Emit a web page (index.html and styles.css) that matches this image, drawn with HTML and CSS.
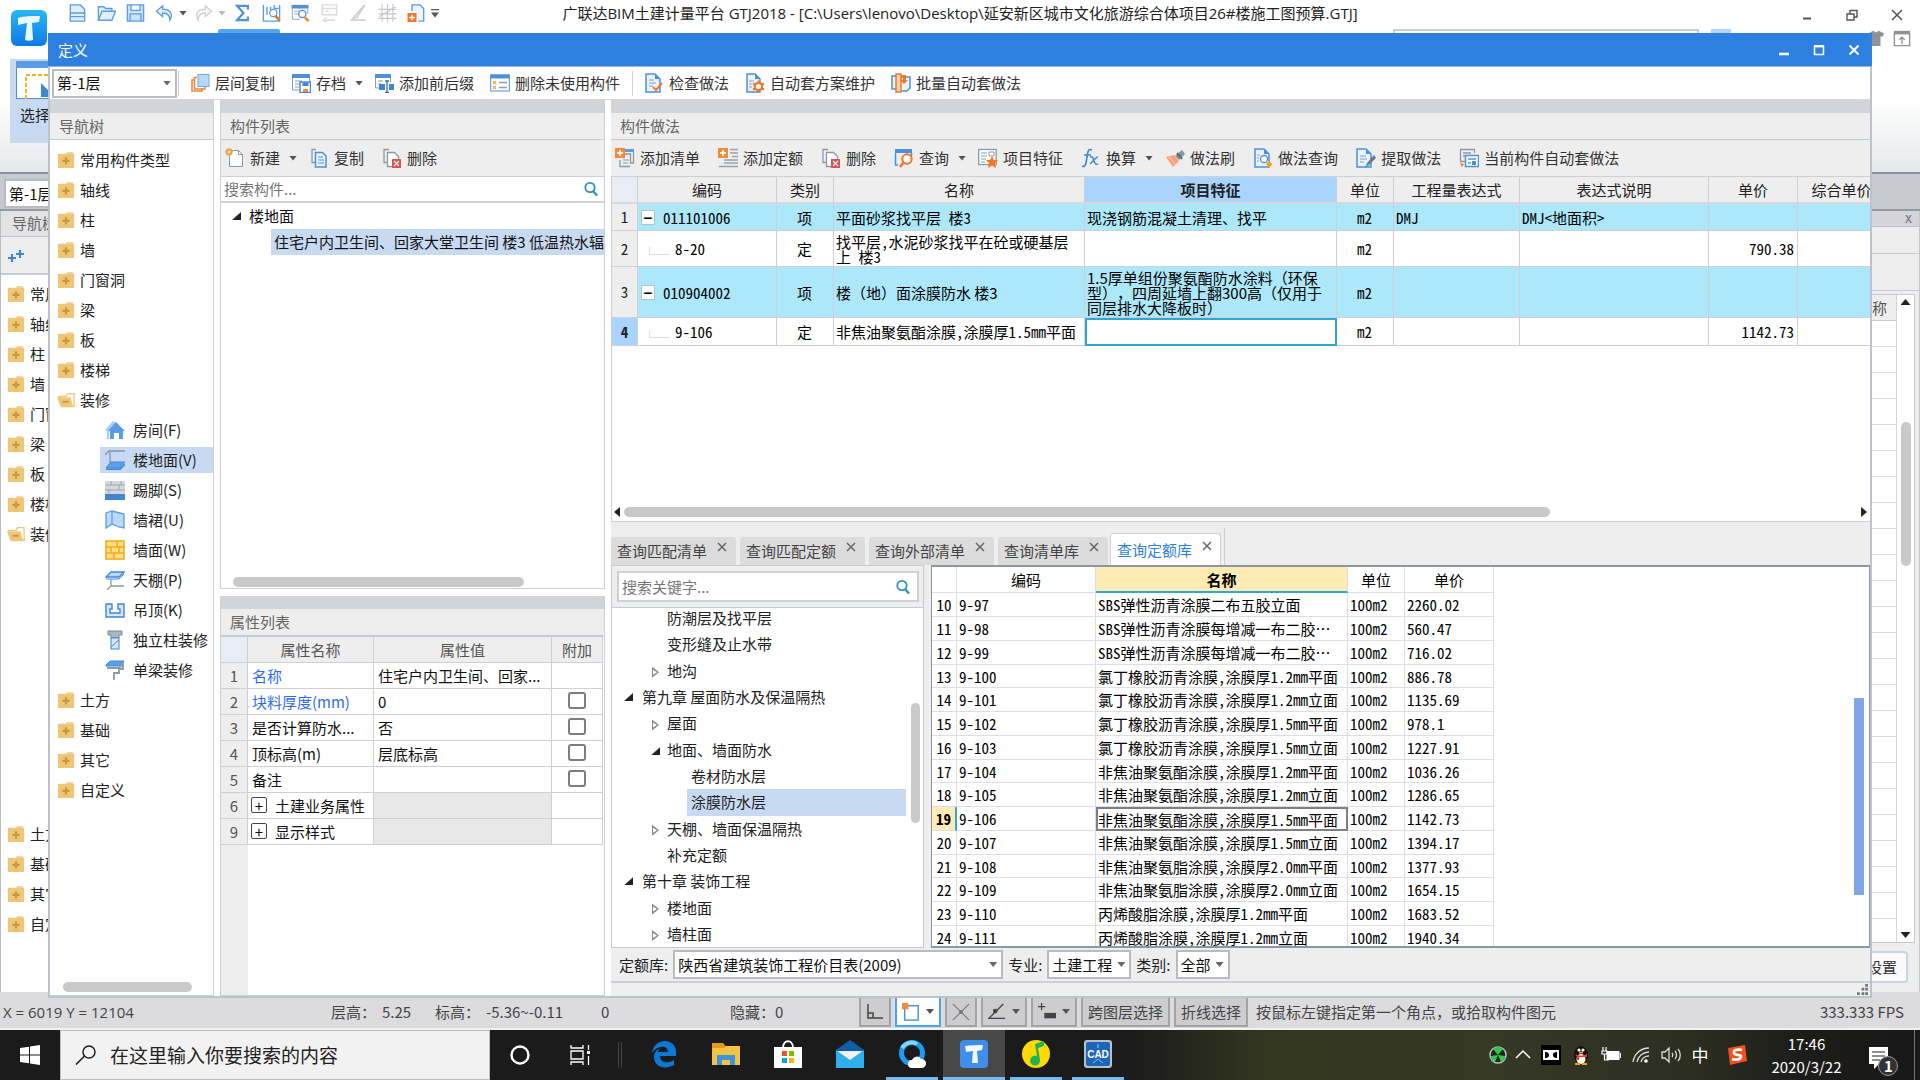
FILE: index.html
```html
<!DOCTYPE html>
<html lang="zh-CN">
<head>
<meta charset="utf-8">
<title>广联达BIM土建计量平台 GTJ2018</title>
<link rel="stylesheet" href="styles.css">
</head>
<body>
<svg class="sprite" aria-hidden="true">
  <symbol id="folder" viewBox="0 0 18 20"><path d="M9 3l1-2h7v3H9z" fill="#f3d6a0"/><rect y="3" width="18" height="16" rx="1" fill="#efc678"/><path d="M9 7v8M5 11h8" stroke="#c8983c" stroke-width="2.4"/></symbol>
  <symbol id="folder-open" viewBox="0 0 20 18"><path d="M2 5h8l2-3h7v14H5z" fill="#fff" stroke="#efc678" stroke-width="1.4"/><path d="M0 6h15l3 11H4z" fill="#efc678"/><path d="M6 11h7" stroke="#c8983c" stroke-width="2"/></symbol>
  <symbol id="search" viewBox="0 0 16 16"><circle cx="7" cy="6.5" r="4.7" fill="none" stroke="#2f8fc4" stroke-width="1.8"/><path d="M10 10l4 4.500" stroke="#2f8fc4" stroke-width="2.400"/></symbol>
  <symbol id="room" viewBox="0 0 20 20"><path d="M0 10L8 1l3 2-7 8v8H2v-8z" fill="#a9cdf5"/><path d="M3 11L11 2l9 9h-2v8h-4v-6H9v6H5v-8z" fill="#5a9ce6"/></symbol>
  <symbol id="floor" viewBox="0 0 20 20"><path d="M0 5l4-4h16M5 1v12" fill="none" stroke="#7d97b5" stroke-width="1.300"/><path d="M1 18l5-6h14l-5 6z" fill="#5aa0ea" stroke="#3f86d6"/><path d="M1 19.300h14l5-5" fill="none" stroke="#3f86d6" stroke-width="1.400"/></symbol>
  <symbol id="skirting" viewBox="0 0 20 20"><rect y="1" width="20" height="13" fill="#d5d8da"/><path d="M0 5h20M0 10h20M6 1v4M14 5v5M4 10v4M16 1v4" stroke="#9fa6ab"/><rect y="14" width="20" height="6" fill="#3f86d6"/></symbol>
  <symbol id="dado" viewBox="0 0 20 20"><path d="M1 3l6-2 12 3v14l-5-1-7-3-6 4z" fill="#bcd9f8" stroke="#5a9ce6" stroke-width="1.300"/><path d="M7 1v13" stroke="#5a9ce6" stroke-width="1.300"/></symbol>
  <symbol id="brick" viewBox="0 0 20 20"><rect x="1" y="1" width="18" height="18" fill="#ffdf8c" stroke="#f5ac14" stroke-width="1.600"/><path d="M1 7h18M1 13h18M12 1v6M6 7v6M14 7v6M9 13v6" stroke="#f5ac14" stroke-width="1.600"/></symbol>
  <symbol id="canopy" viewBox="0 0 20 20"><path d="M1 7l5-5h13l-5 5z" fill="#bcd9f8" stroke="#3f86d6" stroke-width="1.300"/><path d="M1 9h13l5-5" fill="none" stroke="#3f86d6"/><path d="M6 9v7h13M6 16l-4 4" fill="none" stroke="#8d99a5" stroke-width="1.300"/></symbol>
  <symbol id="ceiling" viewBox="0 0 20 20"><path d="M1 4h6v5H5v4h10V9h-2V4h6v13H1z" fill="#d5e7fb" stroke="#3f86d6" stroke-width="1.400"/></symbol>
  <symbol id="column" viewBox="0 0 20 20"><path d="M3 1h14v4h-3v3H6V5H3z" fill="#a9b4be" stroke="#7f8b96"/><rect x="6" y="8" width="8" height="11" fill="#d5e7fb" stroke="#3f86d6"/><path d="M6 17l8-7" stroke="#3f86d6"/></symbol>
  <symbol id="beam" viewBox="0 0 20 20"><path d="M1 5l4-4h14l-4 5H1z" fill="#5aa0ea" stroke="#3f86d6"/><path d="M2 8h12l4-4v5h-4v4H9v7" fill="none" stroke="#8d99a5" stroke-width="1.800"/></symbol>
  <symbol id="layers" viewBox="0 0 20 20"><path d="M5 7H2v11h10v-3" fill="none" stroke="#f08a3c" stroke-width="1.600"/><path d="M7 4.500H4.500V16H15v-2" fill="none" stroke="#f08a3c" stroke-width="1.600"/><rect x="8" y="1.500" width="11" height="12" fill="#b7d8f8" stroke="#6fa8e0"/></symbol>
  <symbol id="archive" viewBox="0 0 20 20"><path d="M1 1h18v4H1z" fill="#4d90dc"/><path d="M1.500 5v12H8M18.500 5v4M4 8h7M4 11h5M4 14h4" fill="none" stroke="#8aa0b8"/><rect x="9" y="9" width="10.500" height="10.500" fill="#fff" stroke="#3f86d6" stroke-width="1.400"/><path d="M11.500 9.500h6v3.500h-6z" fill="#3f86d6"/><path d="M12 16h5v3h-5z" fill="#f08a3c"/></symbol>
  <symbol id="affix" viewBox="0 0 20 20"><path d="M1 1h16v4H1z" fill="#4d90dc"/><path d="M1.500 5v10H7M16.500 5v4M4 8h5M4 11h3" fill="none" stroke="#8aa0b8"/><path d="M5 11h6v6H5zM15 11h5v6h-5z" fill="#3f86d6"/><path d="M13 8v11M11 8h4M11 19.500h4" stroke="#3a6ea8" stroke-width="1.300"/></symbol>
  <symbol id="unused" viewBox="0 0 20 20"><rect x=".700" y="2" width="18.600" height="16" fill="#fff" stroke="#4d90dc"/><path d="M.5 1.500h19v4H.5z" fill="#4d90dc"/><path d="M3 8l3 3M6 8l-3 3M3 13l3 3M6 13l-3 3" stroke="#f5a54a" stroke-width="1.200"/><path d="M9 9.500h8M9 14.500h8" stroke="#8aa0b8" stroke-width="1.500"/></symbol>
  <symbol id="check" viewBox="0 0 20 20"><path d="M2 1h9l5 5v13H2z" fill="#eaf3fd" stroke="#4d90dc" stroke-width="1.500"/><path d="M11 1v5h5z" fill="#4d90dc"/><path d="M5 7h5M5 10h7M5 13h4" stroke="#8aa0b8"/><path d="M9 14l3 3 6-7" fill="none" stroke="#f07828" stroke-width="2"/></symbol>
  <symbol id="gearpage" viewBox="0 0 20 20"><path d="M2 1h8l5 5v13H2z" fill="#eaf3fd" stroke="#4d90dc" stroke-width="1.500"/><path d="M10 1v5h5z" fill="#4d90dc"/><path d="M4 8h5M4 11h3M4 14h3" stroke="#8aa0b8"/><circle cx="13.500" cy="13.500" r="3.700" fill="#fff" stroke="#f07828" stroke-width="2.200"/><path d="M13.500 7.500v2M13.500 17.500v2M8 10.500l2 1M17 15.500l2 1M8 16.500l2-1M17 11.500l2-1" stroke="#f07828" stroke-width="2"/></symbol>
  <symbol id="batch" viewBox="0 0 20 20"><path d="M5 3H1v13h4M12 4h7v11l-3 3h-5" fill="#eaf3fd" stroke="#4d90dc" stroke-width="1.500"/><path d="M5 1h5v18H5z" fill="#fbd3b0" stroke="#f07828" stroke-width="1.500"/><path d="M10 2h5v5h2l-4 4-4-4h3V5h-2z" fill="#f07828"/></symbol>
  <symbol id="new" viewBox="0 0 20 20"><path d="M4.500 2.500h9l4 4v12h-13z" fill="#fff" stroke="#8d99a5"/><path d="M13.500 2.500v4h4" fill="none" stroke="#8d99a5"/><circle cx="4" cy="4" r="3.500" fill="#f5a54a"/><path d="M0 4h8M4 0v8M1 1l6 6M7 1L1 7" stroke="#f5a54a"/><circle cx="4" cy="4" r="1.200" fill="#fff"/></symbol>
  <symbol id="copy" viewBox="0 0 20 20"><path d="M7 1.500H3v13h3" fill="none" stroke="#8d99a5" stroke-width="1.300"/><path d="M6.500 4.500h7l3.500 3.500v11H6.500z" fill="#eaf3fd" stroke="#4d90dc" stroke-width="1.500"/><path d="M9 9h5M9 12h6M9 15h6" stroke="#4d90dc"/></symbol>
  <symbol id="del" viewBox="0 0 20 20"><path d="M7 1.500H2v13h3" fill="none" stroke="#8d99a5" stroke-width="1.300"/><path d="M5.500 4.500h7l4 4v10h-11z" fill="#fff" stroke="#8d99a5" stroke-width="1.300"/><rect x="10" y="11" width="9" height="9" fill="#e05252"/><path d="M12 13l5 5M17 13l-5 5" stroke="#fff" stroke-width="1.200"/></symbol>
  <symbol id="addlist" viewBox="0 0 20 20"><path d="M10 1h9v3h-9z" fill="#5a9ce6"/><path d="M18.500 4v11h-3V6H10M15 18.500H5V12" fill="none" stroke="#8d99a5" stroke-width="1.300"/><path d="M8 12h6M8 15h5" stroke="#8d99a5"/><rect width="10" height="10" fill="#f08a3c"/><path d="M5 2v6M2 5h6" stroke="#fff" stroke-width="1.600"/></symbol>
  <symbol id="addquota" viewBox="0 0 20 20"><path d="M12 1.500h8M12 5h8M14 8.500h6M6 12h14M6 15h14M1 18.500h19" stroke="#9aa1a8" stroke-width="1.600"/><rect width="10" height="10" fill="#f08a3c"/><path d="M5 2v6M2 5h6" stroke="#fff" stroke-width="1.600"/></symbol>
  <symbol id="query" viewBox="0 0 20 20"><path d="M1 1h17v4H1z" fill="#4d90dc"/><path d="M1.500 5v12H4M17.500 5v3" fill="none" stroke="#4d90dc" stroke-width="1.500"/><circle cx="13" cy="11" r="4.700" fill="#fff" stroke="#f07828" stroke-width="2"/><path d="M9.500 14.500L6 19" stroke="#f07828" stroke-width="2.600"/></symbol>
  <symbol id="feature" viewBox="0 0 20 20"><rect x=".700" y="1.500" width="17.500" height="15" fill="#fff" stroke="#8d99a5" stroke-width="1.300"/><path d="M3 5h6M3 8h6M3 11h5M3 14h4M11 4h5v4h-5z" stroke="#8d99a5" fill="none"/><path d="M14 8l2 4h4l-3 3 1 5-4-2.500L10 20l1-5-3-3h4z" fill="#f07828"/></symbol>
  <symbol id="fx" viewBox="0 0 20 20"><path d="M11 2c-3-1.500-4 1-4.500 4L5 15c-.5 3-2 4-4 3M3 7h7" fill="none" stroke="#3f86d6" stroke-width="1.600"/><path d="M9 9c3-1 3 1 4 4s2 4 4 3M17 9c-2-.500-5 5-8 7" fill="none" stroke="#3f86d6" stroke-width="1.500"/></symbol>
  <symbol id="brush" viewBox="0 0 20 20"><path d="M10 8l7-6 3 4-6 6z" fill="#8795a3"/><path d="M12 5l5 6" stroke="#5c6b7a" stroke-width="2"/><path d="M1 9l8-2 5 6-6 6z" fill="#f7a27a"/><path d="M4 9l6 7" stroke="#fbd0ba"/></symbol>
  <symbol id="findpage" viewBox="0 0 20 20"><path d="M2 1h9l5 5v13H2z" fill="#eaf3fd" stroke="#4d90dc" stroke-width="1.500"/><path d="M11 1v5h5z" fill="#4d90dc"/><path d="M4 7h3M4 10h2M4 13h2" stroke="#8aa0b8"/><circle cx="11" cy="11" r="3.500" fill="#fff" stroke="#4d90dc" stroke-width="1.300"/><path d="M16 13l3.500 3.500L16 20l-3-4z" fill="#f5a11c"/></symbol>
  <symbol id="extract" viewBox="0 0 20 20"><path d="M1 1h9l5 5v13H1z" fill="#eaf3fd" stroke="#4d90dc" stroke-width="1.500"/><path d="M10 1v5h5z" fill="#4d90dc"/><path d="M4 8h6M4 11h7M4 14h4" stroke="#8aa0b8"/><path d="M18 7l2 3-7 7-4 3 2-5z" fill="#6c7a88"/><path d="M9 20l2-5 3 2z" fill="#39b6c8"/></symbol>
  <symbol id="autoset" viewBox="0 0 20 20"><path d="M6 13.500H1.500v-12h14V5M4 5h8M4 8h2" fill="none" stroke="#8d99a5" stroke-width="1.300"/><rect x="6.500" y="7.500" width="13" height="11" fill="#fff" stroke="#4d90dc" stroke-width="1.500"/><path d="M9 11h8M9 15h3" stroke="#4d90dc" stroke-width="1.300"/><path d="M13 13h4v4h-4z" fill="#4d90dc"/><path d="M1 15l4 1-2 3z" fill="#f07828"/></symbol>
</svg>

<div class="app">
  <header class="app-top">
    <div class="quick">
      <svg class="logo" viewBox="0 0 36 36"><defs><linearGradient id="lg" x1="0" y1="0" x2="0" y2="1"><stop offset="0" stop-color="#27b8f7"/><stop offset="1" stop-color="#0f78e6"/></linearGradient></defs><rect width="36" height="36" rx="6" fill="url(#lg)"/><path d="M7 8c6-2 13-2 22-2l-1 6-7 1 1 17c-3 1-5 1-8 0l2-17-9 2z" fill="#e9f7ff"/></svg>
      <div class="quick-icons">
        <svg viewBox="0 0 20 20"><path d="M2 1h11l5 5v13H2zM2 10h16M2 14h16" fill="#e3effc" stroke="#5a9ce6" stroke-width="1.500"/></svg>
        <svg viewBox="0 0 20 20"><path d="M1 18V3h6l2 2h7v3M1 18L5 8h15l-4 10z" fill="#e3effc" stroke="#5a9ce6" stroke-width="1.500"/></svg>
        <svg viewBox="0 0 20 20"><path d="M1 1h18v18H1zM5 1v6h10V1M4 19v-8h12v8" fill="#cfe3fa" stroke="#5a9ce6" stroke-width="1.500"/></svg>
        <svg viewBox="0 0 20 20"><path d="M8 2L1 8l7 6v-4c5 0 8 2 8 8 4-7 0-13-8-12z" fill="#e3effc" stroke="#5a9ce6" stroke-width="1.400"/></svg>
        <i class="caret"></i>
        <svg viewBox="0 0 20 20"><path d="M12 2l7 6-7 6v-4c-5 0-8 2-8 8C0 11 4 5 12 6z" fill="#f7f7f7" stroke="#cdd0d3" stroke-width="1.400"/></svg>
        <i class="caret pale"></i>
        <svg viewBox="0 0 20 20"><path d="M16 6V2H4l7 8-7 8h12v-4" fill="none" stroke="#4d90dc" stroke-width="2.400"/></svg>
        <svg viewBox="0 0 20 20"><path d="M1 1v18h18V1M5 3v9M9 3v9M13 1v4h5" fill="none" stroke="#5a9ce6" stroke-width="1.500"/><circle cx="12" cy="10" r="4" fill="#fff" stroke="#5a9ce6" stroke-width="1.400"/><path d="M14 13l5 5" stroke="#e07a3a" stroke-width="3"/></svg>
        <svg viewBox="0 0 20 20"><path d="M0 1h19v4H0z" fill="#4d90dc"/><path d="M1 5v12h8M18 5v6M3 8h5M3 11h4" fill="none" stroke="#8aa0b8"/><circle cx="12" cy="11" r="4" fill="#fff" stroke="#4d90dc" stroke-width="1.500"/><path d="M15 15l4 4" stroke="#f5921c" stroke-width="3"/></svg>
        <svg viewBox="0 0 20 20"><path d="M2 1h16v11H2zM2 5h16M6 8h3M7 15l-4 3 4 2M3 18h13" fill="none" stroke="#dadcde" stroke-width="1.600"/></svg>
        <svg viewBox="0 0 20 20"><path d="M17 1L6 13l-2 3 4-1zM1 18h17" fill="none" stroke="#cfd1d4" stroke-width="2"/></svg>
        <svg viewBox="0 0 20 20"><path d="M4 0v20M10 0v20M16 0v20M0 6h20M0 11h20M0 16h20M1 14L19 3" fill="none" stroke="#c3c6ca" stroke-width="1.200"/></svg>
        <svg viewBox="0 0 20 20"><path d="M5 8V1h9l4 4v14h-6" fill="#eef5fd" stroke="#5a9ce6" stroke-width="1.500"/><rect y="10" width="10" height="10" fill="#f07828"/><path d="M5 12v6M2 15h6" stroke="#fff" stroke-width="1.500"/></svg>
        <i class="caret more"></i>
      </div>
    </div>
    <h1 class="app-title">广联达BIM土建计量平台 GTJ2018 - [C:\Users\lenovo\Desktop\延安新区城市文化旅游综合体项目26#楼施工图预算.GTJ]</h1>
    <div class="app-right">
      <div class="win-controls">
        <button aria-label="最小化"><svg viewBox="0 0 12 12"><path d="M2 9.500h8" stroke="#555" stroke-width="2"/></svg></button>
        <button aria-label="还原"><svg viewBox="0 0 12 12"><path d="M1 5h7v6H1zM4 5V1.500h7V8H8" fill="none" stroke="#555" stroke-width="1.400"/></svg></button>
        <button aria-label="关闭"><svg viewBox="0 0 12 12"><path d="M1 1l10 10M11 1L1 11" stroke="#555" stroke-width="1.500"/></svg></button>
      </div>
      <div class="app-tools">
        <span class="app-search"></span>
        <span class="avatar"></span>
        <svg viewBox="0 0 20 20"><path d="M7 2l3 2 3-2 6 3-2 4-2-1v11H5V8L3 9 1 5z" fill="#8f9296"/></svg>
        <svg viewBox="0 0 20 20"><path d="M1 2h18v4H1z" fill="#8f9296"/><path d="M1.500 5v13.500h17V5M10 17V9M7 12l3-3 3 3" fill="none" stroke="#8f9296" stroke-width="1.500"/></svg>
      </div>
    </div>
    <span class="ribbon-tab"></span>
  </header>
  <section class="ribbon">
    <button class="pick"><svg viewBox="0 0 50 38"><rect x=".5" y=".5" width="49" height="37" fill="#fff" stroke="#4d90dc"/><rect width="50" height="7" fill="#5a9ce6"/><path d="M10 38V14h40" fill="none" stroke="#f5b41c" stroke-width="2" stroke-dasharray="4 2"/><path d="M25 22l14 14H25z" fill="#3f86d6"/></svg><span>选择</span></button>
  </section>
  <section class="strip"><span class="combo"><select aria-label="楼层"><option>第-1层</option></select></span></section>
  <div class="workspace">
    <aside class="back-nav">
      <h2 class="back-title">导航树</h2>
      <div class="back-tools"><svg viewBox="0 0 16 14"><path d="M4 5v8M0 9h8M12 1v8M8 5h8" stroke="#3f86d6" stroke-width="2.200"/></svg></div>
      <ul class="nav">
        <li><svg class="fi"><use href="#folder"/></svg>常用构件类型</li>
        <li><svg class="fi"><use href="#folder"/></svg>轴线</li>
        <li><svg class="fi"><use href="#folder"/></svg>柱</li>
        <li><svg class="fi"><use href="#folder"/></svg>墙</li>
        <li><svg class="fi"><use href="#folder"/></svg>门窗洞</li>
        <li><svg class="fi"><use href="#folder"/></svg>梁</li>
        <li><svg class="fi"><use href="#folder"/></svg>板</li>
        <li><svg class="fi"><use href="#folder"/></svg>楼梯</li>
        <li><svg class="fi"><use href="#folder-open"/></svg>装修</li>
        <li class="after-open"><svg class="fi"><use href="#folder"/></svg>土方</li>
        <li><svg class="fi"><use href="#folder"/></svg>基础</li>
        <li><svg class="fi"><use href="#folder"/></svg>其它</li>
        <li><svg class="fi"><use href="#folder"/></svg>自定义</li>
      </ul>
    </aside>
    <aside class="back-side">
      <div class="side-head"><button aria-label="关闭面板">x</button></div>
      <div class="side-bar"></div>
      <div class="side-bar tall"></div>
      <div class="side-body">
        <div class="side-grid"><div class="side-th">称</div></div>
        <div class="side-scroll"><i class="tri up"></i><i class="thumb"></i><i class="tri down"></i></div>
      </div>
      <div class="side-foot"><button>设置</button></div>
    </aside>
  </div>
  <footer class="status">
    <span class="coord">X = 6019 Y = 12104</span>
    <span class="level">层高：</span><span class="level-v">5.25</span>
    <span class="elev">标高：</span><span class="elev-v">-5.36~-0.11</span>
    <span class="zero">0</span>
    <span class="hid">隐藏：0</span>
    <div class="modes">
      <button aria-label="正交"><svg viewBox="0 0 18 18"><path d="M2 1v14h15M2 10h5v5" fill="none" stroke="#444" stroke-width="1.500"/></svg></button>
      <button class="on" aria-label="矩形"><svg viewBox="0 0 20 20"><rect x="3" y="3" width="15" height="16" fill="none" stroke="#4d90dc" stroke-width="1.600"/><rect width="7" height="7" fill="#f08a3c"/></svg><i class="caret"></i></button>
      <button aria-label="交点"><svg viewBox="0 0 20 20"><path d="M1 1l18 18M19 1L1 19" stroke="#777" stroke-width="1.200"/><rect x="8" y="8" width="4" height="4" fill="#777"/></svg></button>
      <button aria-label="角度"><svg viewBox="0 0 20 20"><path d="M17 1L1 17h18" fill="none" stroke="#444" stroke-width="1.500"/><circle cx="8" cy="9" r="2.600" fill="#444"/></svg><i class="caret"></i></button>
      <button aria-label="偏移"><svg viewBox="0 0 20 20"><path d="M4 0v8M0 4h8" stroke="#444" stroke-width="1.400"/><rect x="7" y="11" width="13" height="6" fill="#444"/></svg><i class="caret"></i></button>
      <button>跨图层选择</button>
      <button>折线选择</button>
    </div>
    <span class="hint">按鼠标左键指定第一个角点，或拾取构件图元</span>
    <span class="fps">333.333 FPS</span>
  </footer>
  <nav class="taskbar">
    <button class="start" aria-label="开始"><svg viewBox="0 0 20 20"><path d="M0 3l9-1.200v7.700H0zM10 1.600L20 0v9.500H10zM0 10.500h9v7.700L0 17zM10 10.500h10V20l-10-1.600z" fill="#fff"/></svg></button>
    <label class="task-search"><svg viewBox="0 0 22 20"><circle cx="14" cy="7" r="6" fill="none" stroke="#222" stroke-width="1.500"/><path d="M9.500 11L1 19.500" stroke="#222" stroke-width="1.600"/></svg><input type="text" placeholder="在这里输入你要搜索的内容"></label>
    <div class="task-sys">
      <svg viewBox="0 0 20 20"><circle cx="10" cy="10" r="8.500" fill="none" stroke="#fff" stroke-width="2.400"/></svg>
      <svg viewBox="0 0 20 20"><path d="M1 0v3h12V0M1 20v-3h12v3M1 6h12v8H1zM18.500 0v5M18.500 11v9" fill="none" stroke="#fff" stroke-width="1.300"/><rect x="17" y="6" width="3" height="3" fill="#fff"/></svg>
      <i class="grip"></i>
    </div>
    <div class="task-apps">
      <a href="#" aria-label="Edge"><svg viewBox="0 0 28 28"><path d="M2 13C3 5 9 1 15 1c7 0 11 5 11 11v4H10c0 7 8 8 14 4v5c-9 5-20 2-20-8 0-4 2-7 6-9-2 2-2 3-2 4h10c0-7-11-7-16 1z" fill="#0a78d6"/></svg></a>
      <a href="#" aria-label="文件资源管理器"><svg viewBox="0 0 28 28"><path d="M0 3h11l2 3h15v19H0z" fill="#f5c344"/><path d="M0 3h11l2 3v2H0z" fill="#e09a1c"/><path d="M5 25V15h18v10h-5v-5h-8v5z" fill="#3b94dc"/></svg></a>
      <a href="#" aria-label="应用商店"><svg viewBox="0 0 28 28"><path d="M9 8c0-9 10-9 10 0" fill="none" stroke="#fff" stroke-width="1.800"/><path d="M0 7h28v21H0z" fill="#fff"/><path d="M8 11h5v5H8z" fill="#f25022"/><path d="M15 11h5v5h-5z" fill="#7fba00"/><path d="M8 18h5v5H8z" fill="#00a4ef"/><path d="M15 18h5v5h-5z" fill="#ffb900"/></svg></a>
      <a href="#" aria-label="邮件"><svg viewBox="0 0 28 28"><path d="M0 10L14 0l14 10v17H0z" fill="#0f5fa8"/><path d="M2 11h24v9H2z" fill="#f2f2f2"/><path d="M0 10l14 10 14-10v18H0z" fill="#2fb0ee"/></svg></a>
      <a href="#" class="run" aria-label="浏览器"><svg viewBox="0 0 28 28"><circle cx="14" cy="13" r="10.500" fill="none" stroke="#1e9bf0" stroke-width="5"/><path d="M4 8a11 11 0 0 1 15-4" fill="none" stroke="#7fd4fa" stroke-width="4"/><path d="M14 28a4 4 0 0 1 0-8 5 5 0 0 1 9-1 4.500 4.500 0 0 1 1 9z" fill="#fff"/></svg></a>
      <a href="#" class="run active" aria-label="广联达"><svg viewBox="0 0 28 28"><rect width="28" height="28" rx="4" fill="#3f8eea"/><path d="M5 6c6-1 12-1 18-1l-1 5-5 1 1 12h-6l1-12-7 1z" fill="#f1f8ff"/></svg></a>
      <a href="#" class="run" aria-label="音乐"><svg viewBox="0 0 28 28"><circle cx="14" cy="14" r="14" fill="#ffd900"/><path d="M13 4l9-3v5l-6 2 2 12a5 5 0 1 1-3-4z" fill="#1fb25a"/></svg></a>
      <a href="#" class="run" aria-label="CAD"><svg viewBox="0 0 28 28"><rect width="28" height="28" rx="3" fill="#b9c0c8"/><rect x="2" y="2" width="24" height="24" rx="2" fill="#1c66b8"/><path d="M9 23l5-4 5 4M14 4v4" fill="none" stroke="#8fc0ee"/><text x="14" y="18" text-anchor="middle" class="cad">CAD</text></svg></a>
    </div>
    <div class="tray">
      <svg viewBox="0 0 20 20"><circle cx="10" cy="10" r="8" fill="#222" stroke="#bbb" stroke-width="1.500"/><path d="M10 10L5 4a8 8 0 0 1 10 0zM10 10l7 1a7 7 0 0 1-4 6zM10 10l-7 1a7 7 0 0 0 4 6z" fill="#2fc84a"/></svg>
      <svg class="chev" viewBox="0 0 16 16"><path d="M1 11l7-7 7 7" fill="none" stroke="#fff" stroke-width="1.500"/></svg>
      <svg viewBox="0 0 20 20"><rect width="20" height="20" fill="#000"/><path d="M2 5h16v10H2z" fill="#fff"/><path d="M4 7c3 0 4 1 4 3s-1 3-4 3zM16 7c-3 0-4 1-4 3s1 3 4 3z" fill="#000"/></svg>
      <svg viewBox="0 0 20 20"><ellipse cx="10" cy="10" rx="7" ry="9" fill="#111"/><ellipse cx="10" cy="14" rx="4.500" ry="5" fill="#fff"/><circle cx="8" cy="5" r="1.600" fill="#fff"/><circle cx="12" cy="5" r="1.600" fill="#fff"/><path d="M4 9c4 2 8 2 12 0v3H8v3H6v-3z" fill="#e32"/><path d="M4 19h5M11 19h5M8 7.500h4" stroke="#f5a11c" stroke-width="2"/></svg>
      <svg viewBox="0 0 20 20"><rect x="5.500" y="6" width="13" height="9" fill="#fff"/><path d="M19.500 8v5M2 2v4M5 2v4M1 6h5v3H1zM3.500 9v6H8" fill="none" stroke="#fff" stroke-width="1.200"/></svg>
      <svg viewBox="0 0 20 20"><path d="M2 17A16 16 0 0 1 18 3M6 17A12 12 0 0 1 18 7M10 17a8 8 0 0 1 8-6" fill="none" stroke="#ddd" stroke-width="1.300"/><circle cx="15" cy="16" r="1.800" fill="#fff"/></svg>
      <svg viewBox="0 0 20 20"><path d="M1 7h3l4-4v14l-4-4H1zM11 8c1 1 1 3 0 4M14 6c2 2 2 6 0 8M17 4c3 3 3 9 0 12" fill="none" stroke="#ddd" stroke-width="1.300"/></svg>
      <span class="ime">中</span>
      <svg viewBox="0 0 20 20"><path d="M1 3l17-3 2 16-17 4z" fill="#f2501e"/><path d="M15 5c-5-1-9 0-8 3s8 1 7 4-6 3-9 2" fill="none" stroke="#fff" stroke-width="2.600"/></svg>
    </div>
    <div class="clock"><span>17:46</span><span>2020/3/22</span></div>
    <div class="notice"><svg viewBox="0 0 30 32"><path d="M1 2h19v17h-9l-5 5v-5H1z" fill="#fff"/><path d="M4 7h13M4 11h13M4 15h8" stroke="#222"/><circle cx="20" cy="21" r="9.500" fill="#333" stroke="#999"/></svg><b>1</b></div>
  </nav>
</div>

<section class="dialog">
  <header class="dlg-head"><h2>定义</h2>
    <div class="dlg-controls">
      <button aria-label="最小化"><svg viewBox="0 0 12 12"><path d="M1 10h10" stroke="#fff" stroke-width="2.600"/></svg></button>
      <button aria-label="最大化"><svg viewBox="0 0 12 12"><path d="M1.500 2h9v8.500h-9z" fill="none" stroke="#fff" stroke-width="1.500"/><path d="M1 2.200h10" stroke="#fff" stroke-width="2.400"/></svg></button>
      <button aria-label="关闭"><svg viewBox="0 0 12 12"><path d="M1.500 1.500l9 9M10.500 1.500l-9 9" stroke="#fff" stroke-width="2"/></svg></button>
    </div>
  </header>
  <div class="dlg-main">
    <div class="toolbar top-tools">
      <span class="combo"><select aria-label="楼层"><option>第-1层</option></select></span>
      <i class="sep"></i>
      <button><svg><use href="#layers"/></svg>层间复制</button>
      <button class="drop"><svg><use href="#archive"/></svg>存档<i class="caret"></i></button>
      <button><svg><use href="#affix"/></svg>添加前后缀</button>
      <button><svg><use href="#unused"/></svg>删除未使用构件</button>
      <i class="sep"></i>
      <button><svg><use href="#check"/></svg>检查做法</button>
      <button><svg><use href="#gearpage"/></svg>自动套方案维护</button>
      <button><svg><use href="#batch"/></svg>批量自动套做法</button>
    </div>
    <div class="dlg-body">
      <aside class="panel">
        <h3 class="panel-title">导航树</h3>
        <ul class="nav">
          <li><svg class="fi"><use href="#folder"/></svg>常用构件类型</li>
          <li><svg class="fi"><use href="#folder"/></svg>轴线</li>
          <li><svg class="fi"><use href="#folder"/></svg>柱</li>
          <li><svg class="fi"><use href="#folder"/></svg>墙</li>
          <li><svg class="fi"><use href="#folder"/></svg>门窗洞</li>
          <li><svg class="fi"><use href="#folder"/></svg>梁</li>
          <li><svg class="fi"><use href="#folder"/></svg>板</li>
          <li><svg class="fi"><use href="#folder"/></svg>楼梯</li>
          <li><svg class="fi"><use href="#folder-open"/></svg>装修</li>
          <li class="kid"><svg><use href="#room"/></svg>房间(F)</li>
          <li class="kid sel"><svg><use href="#floor"/></svg>楼地面(V)</li>
          <li class="kid"><svg><use href="#skirting"/></svg>踢脚(S)</li>
          <li class="kid"><svg><use href="#dado"/></svg>墙裙(U)</li>
          <li class="kid"><svg><use href="#brick"/></svg>墙面(W)</li>
          <li class="kid"><svg><use href="#canopy"/></svg>天棚(P)</li>
          <li class="kid"><svg><use href="#ceiling"/></svg>吊顶(K)</li>
          <li class="kid"><svg><use href="#column"/></svg>独立柱装修</li>
          <li class="kid"><svg><use href="#beam"/></svg>单梁装修</li>
          <li><svg class="fi"><use href="#folder"/></svg>土方</li>
          <li><svg class="fi"><use href="#folder"/></svg>基础</li>
          <li><svg class="fi"><use href="#folder"/></svg>其它</li>
          <li><svg class="fi"><use href="#folder"/></svg>自定义</li>
        </ul>
        <i class="hbar"></i>
      </aside>
      <div class="mid">
        <section class="panel">
          <h3 class="panel-title">构件列表</h3>
          <div class="toolbar sub-tools">
            <button class="drop"><svg><use href="#new"/></svg>新建<i class="caret"></i></button>
            <button><svg><use href="#copy"/></svg>复制</button>
            <button><svg><use href="#del"/></svg>删除</button>
          </div>
          <label class="search flat"><input type="text" placeholder="搜索构件..."><svg><use href="#search"/></svg></label>
          <ul class="parts">
            <li><i class="open"></i>楼地面</li>
            <li class="part sel">住宅户内卫生间、回家大堂卫生间 楼3 低温热水辐射</li>
          </ul>
          <i class="hbar wide"></i>
        </section>
        <section class="panel">
          <h3 class="panel-title">属性列表</h3>
          <div class="props-wrap">
          <table class="props">
            <colgroup><col class="p0"><col class="p1"><col class="p2"><col class="p3"></colgroup>
            <thead><tr><th></th><th>属性名称</th><th>属性值</th><th>附加</th></tr></thead>
            <tbody>
              <tr><th>1</th><td class="link">名称</td><td>住宅户内卫生间、回家...</td><td></td></tr>
              <tr><th>2</th><td class="link">块料厚度(mm)</td><td>0</td><td class="tick"><input type="checkbox" aria-label="附加 块料厚度"></td></tr>
              <tr><th>3</th><td>是否计算防水...</td><td>否</td><td class="tick"><input type="checkbox" aria-label="附加 防水"></td></tr>
              <tr><th>4</th><td>顶标高(m)</td><td>层底标高</td><td class="tick"><input type="checkbox" aria-label="附加 顶标高"></td></tr>
              <tr><th>5</th><td>备注</td><td></td><td class="tick"><input type="checkbox" aria-label="附加 备注"></td></tr>
              <tr><th>6</th><td class="grp"><button class="plus">+</button>土建业务属性</td><td class="off"></td><td></td></tr>
              <tr><th>9</th><td class="grp"><button class="plus">+</button>显示样式</td><td class="off"></td><td></td></tr>
            </tbody>
          </table>
          </div>
        </section>
      </div>
      <section class="work">
        <div class="work-head">
          <h3 class="panel-title">构件做法</h3>
          <div class="toolbar sub-tools">
            <button><svg><use href="#addlist"/></svg>添加清单</button>
            <button><svg><use href="#addquota"/></svg>添加定额</button>
            <button><svg><use href="#del"/></svg>删除</button>
            <button class="drop"><svg><use href="#query"/></svg>查询<i class="caret"></i></button>
            <button><svg><use href="#feature"/></svg>项目特征</button>
            <button class="drop"><svg><use href="#fx"/></svg>换算<i class="caret"></i></button>
            <button><svg><use href="#brush"/></svg>做法刷</button>
            <button><svg><use href="#findpage"/></svg>做法查询</button>
            <button><svg><use href="#extract"/></svg>提取做法</button>
            <button><svg><use href="#autoset"/></svg>当前构件自动套做法</button>
          </div>
        </div>
        <div class="sheet">
          <table class="bill">
            <colgroup><col class="b0"><col class="b1"><col class="b2"><col class="b3"><col class="b4"><col class="b5"><col class="b6"><col class="b7"><col class="b8"><col class="b9"></colgroup>
            <thead><tr><th></th><th>编码</th><th>类别</th><th>名称</th><th class="hot">项目特征</th><th>单位</th><th>工程量表达式</th><th>表达式说明</th><th>单价</th><th>综合单价</th></tr></thead>
            <tbody>
              <tr class="item one"><th>1</th><td class="code"><button class="fold">−</button>011101006</td><td class="mid-c">项</td><td>平面砂浆找平层 楼3</td><td>现浇钢筋混凝土清理、找平</td><td class="mid-c">m2</td><td>DMJ</td><td>DMJ&lt;地面积&gt;</td><td></td><td></td></tr>
              <tr class="two"><th>2</th><td class="sub"><i class="branch"></i>8-20</td><td class="mid-c">定</td><td>找平层,水泥砂浆找平在砼或硬基层上 楼3</td><td></td><td class="mid-c">m2</td><td></td><td></td><td class="num">790.38</td><td></td></tr>
              <tr class="item three"><th>3</th><td class="code"><button class="fold">−</button>010904002</td><td class="mid-c">项</td><td class="full">楼（地）面涂膜防水 楼3</td><td class="full">1.5厚单组份聚氨酯防水涂料（环保型），四周延墙上翻300高（仅用于同层排水大降板时）</td><td class="mid-c">m2</td><td></td><td></td><td></td><td></td></tr>
              <tr><th class="cur">4</th><td class="sub"><i class="branch"></i>9-106</td><td class="mid-c">定</td><td>非焦油聚氨酯涂膜,涂膜厚1.5mm平面</td><td class="edit"></td><td class="mid-c">m2</td><td></td><td></td><td class="num">1142.73</td><td></td></tr>
            </tbody>
          </table>
          <div class="sheet-scroll"><i class="tri left"></i><i class="track"></i><i class="tri right"></i></div>
        </div>
        <div class="lower">
          <div class="tabs">
            <div class="tab"><button>查询匹配清单</button><button class="x" aria-label="关闭"><svg viewBox="0 0 10 10"><path d="M1 1l8 8M9 1L1 9"/></svg></button></div>
            <div class="tab"><button>查询匹配定额</button><button class="x" aria-label="关闭"><svg viewBox="0 0 10 10"><path d="M1 1l8 8M9 1L1 9"/></svg></button></div>
            <div class="tab"><button>查询外部清单</button><button class="x" aria-label="关闭"><svg viewBox="0 0 10 10"><path d="M1 1l8 8M9 1L1 9"/></svg></button></div>
            <div class="tab"><button>查询清单库</button><button class="x" aria-label="关闭"><svg viewBox="0 0 10 10"><path d="M1 1l8 8M9 1L1 9"/></svg></button></div>
            <div class="tab act"><button>查询定额库</button><button class="x" aria-label="关闭"><svg viewBox="0 0 10 10"><path d="M1 1l8 8M9 1L1 9"/></svg></button></div>
            <i class="tab-end"></i>
          </div>
          <div class="query">
            <div class="chapters">
              <label class="search boxed"><input type="text" placeholder="搜索关键字..."><svg><use href="#search"/></svg></label>
              <div class="tree-area">
                <ul class="tree">
                  <li class="l2">防潮层及找平层</li>
                  <li class="l2">变形缝及止水带</li>
                  <li class="l2"><i class="shut"></i>地沟</li>
                  <li class="l1"><i class="open"></i>第九章 屋面防水及保温隔热</li>
                  <li class="l2"><i class="shut"></i>屋面</li>
                  <li class="l2"><i class="open"></i>地面、墙面防水</li>
                  <li class="l3">卷材防水层</li>
                  <li class="l3 sel">涂膜防水层</li>
                  <li class="l2"><i class="shut"></i>天棚、墙面保温隔热</li>
                  <li class="l2">补充定额</li>
                  <li class="l1"><i class="open"></i>第十章 装饰工程</li>
                  <li class="l2"><i class="shut"></i>楼地面</li>
                  <li class="l2"><i class="shut"></i>墙柱面</li>
                </ul>
                <i class="vbar"></i>
              </div>
            </div>
            <div class="quota">
              <table class="rates">
                <colgroup><col class="r0"><col class="r1"><col class="r2"><col class="r3"><col class="r4"></colgroup>
                <thead><tr><th></th><th>编码</th><th class="hot">名称</th><th>单位</th><th>单价</th></tr></thead>
                <tbody>
                  <tr><th>10</th><td>9-97</td><td>SBS弹性沥青涂膜二布五胶立面</td><td>100m2</td><td>2260.02</td></tr>
                  <tr><th>11</th><td>9-98</td><td>SBS弹性沥青涂膜每增减一布二胶…</td><td>100m2</td><td>560.47</td></tr>
                  <tr><th>12</th><td>9-99</td><td>SBS弹性沥青涂膜每增减一布二胶…</td><td>100m2</td><td>716.02</td></tr>
                  <tr><th>13</th><td>9-100</td><td>氯丁橡胶沥青涂膜,涂膜厚1.2mm平面</td><td>100m2</td><td>886.78</td></tr>
                  <tr><th>14</th><td>9-101</td><td>氯丁橡胶沥青涂膜,涂膜厚1.2mm立面</td><td>100m2</td><td>1135.69</td></tr>
                  <tr><th>15</th><td>9-102</td><td>氯丁橡胶沥青涂膜,涂膜厚1.5mm平面</td><td>100m2</td><td>978.1</td></tr>
                  <tr><th>16</th><td>9-103</td><td>氯丁橡胶沥青涂膜,涂膜厚1.5mm立面</td><td>100m2</td><td>1227.91</td></tr>
                  <tr><th>17</th><td>9-104</td><td>非焦油聚氨酯涂膜,涂膜厚1.2mm平面</td><td>100m2</td><td>1036.26</td></tr>
                  <tr><th>18</th><td>9-105</td><td>非焦油聚氨酯涂膜,涂膜厚1.2mm立面</td><td>100m2</td><td>1286.65</td></tr>
                  <tr><th class="cur">19</th><td>9-106</td><td class="pickd">非焦油聚氨酯涂膜,涂膜厚1.5mm平面</td><td>100m2</td><td>1142.73</td></tr>
                  <tr><th>20</th><td>9-107</td><td>非焦油聚氨酯涂膜,涂膜厚1.5mm立面</td><td>100m2</td><td>1394.17</td></tr>
                  <tr><th>21</th><td>9-108</td><td>非焦油聚氨脂涂膜,涂膜厚2.0mm平面</td><td>100m2</td><td>1377.93</td></tr>
                  <tr><th>22</th><td>9-109</td><td>非焦油聚氨脂涂膜,涂膜厚2.0mm立面</td><td>100m2</td><td>1654.15</td></tr>
                  <tr><th>23</th><td>9-110</td><td>丙烯酸脂涂膜,涂膜厚1.2mm平面</td><td>100m2</td><td>1683.52</td></tr>
                  <tr><th>24</th><td>9-111</td><td>丙烯酸脂涂膜,涂膜厚1.2mm立面</td><td>100m2</td><td>1940.34</td></tr>
                </tbody>
              </table>
              <i class="bluebar"></i>
            </div>
          </div>
          <div class="filters">
            <label for="lib">定额库:</label><span class="combo lib"><select id="lib"><option>陕西省建筑装饰工程价目表(2009)</option></select></span>
            <label for="major">专业:</label><span class="combo major"><select id="major"><option>土建工程</option></select></span>
            <label for="kind">类别:</label><span class="combo kind"><select id="kind"><option>全部</option></select></span>
          </div>
        </div>
        <div class="dlg-foot"><svg viewBox="0 0 12 12"><path d="M9 0h3v3H9zM5 4h3v3H5zM9 4h3v3H9zM0 9h3v3H0zM5 9h3v3H5zM9 9h3v3H9z" fill="#777"/></svg></div>
      </section>
    </div>
  </div>
</section>
</body>
</html>
```

FILE: styles.css
```css
* { box-sizing: border-box; }
html, body { height: 100%; }
body {
  margin: 0;
  overflow: hidden;
  font: 15px/20px "Noto Sans CJK SC", sans-serif;
  color: #222;
  background: #fff;
}
h1, h2, h3 { margin: 0; font-size: 15px; font-weight: 400; }
ul { margin: 0; padding: 0; list-style: none; }
button, select, input { font: inherit; color: inherit; }
button { margin: 0; padding: 0; border: 0; background: none; white-space: nowrap; }
svg { display: block; flex: none; }
i { display: block; flex: none; }
a { color: inherit; text-decoration: none; }
input::placeholder { color: #777; opacity: 1; }
.sprite { display: none; }

.caret { width: 8px; height: 5px; background: #555; clip-path: polygon(0 0, 100% 0, 50% 100%); }
.caret.pale { background: #bbb; }
.caret.more { height: 9px; background: #555; clip-path: polygon(0 0, 100% 0, 100% 20%, 0 20%, 0 45%, 100% 45%, 50% 100%, 0 45%); }
.tri { background: #222; }
.tri.up { width: 10px; height: 6px; clip-path: polygon(50% 0, 100% 100%, 0 100%); }
.tri.down { width: 10px; height: 6px; clip-path: polygon(0 0, 100% 0, 50% 100%); }
.tri.left { width: 6px; height: 10px; clip-path: polygon(100% 0, 100% 100%, 0 50%); }
.tri.right { width: 6px; height: 10px; clip-path: polygon(0 0, 100% 50%, 0 100%); }

.combo { display: inline-grid; align-items: center; height: 29px; background: #fff; border: 2px solid #b9bbbe; }
.combo select { grid-area: 1 / 1; width: 100%; height: 100%; padding: 0 3px; border: 0; background: none; appearance: none; color: #111; }
.combo::after { content: ""; grid-area: 1 / 1; justify-self: end; width: 8px; height: 5px; margin-right: 4px; background: #666; clip-path: polygon(0 0, 100% 0, 50% 100%); pointer-events: none; }

/* main window */
.app { display: flex; flex-direction: column; height: 100vh; }
.app-top { position: relative; display: grid; grid-template-columns: 1fr auto 1fr; height: 52px; }
.quick { display: flex; align-items: flex-start; padding-left: 11px; gap: 21px; }
.logo { width: 36px; height: 36px; margin-top: 10px; }
.quick-icons { display: flex; align-items: center; gap: 10px; height: 26px; }
.quick-icons svg { width: 19px; height: 18px; }
.quick-icons .caret { margin: 0 -3px 0 -5px; }
.app-title { font-family: "Open Sans", "Noto Sans CJK SC", sans-serif; line-height: 26px; color: #222; white-space: nowrap; }
.app-right { display: flex; flex-direction: column; align-items: flex-end; }
.win-controls { display: flex; gap: 33px; height: 29px; padding-right: 17px; align-items: center; }
.win-controls svg { width: 12px; height: 12px; }
.app-tools { display: flex; gap: 8px; padding-right: 9px; align-items: flex-start; }
.app-tools svg { width: 18px; height: 18px; }
.app-search { width: 306px; height: 10px; border: 2px solid #c9cbce; margin-right: 4px; }
.avatar { width: 20px; height: 16px; background: #b3d7fb; margin-right: 128px; }
.ribbon-tab { position: absolute; left: 218px; top: 29px; width: 62px; height: 10px; background: #58a4f0; border-radius: 2px; }
.ribbon { height: 122px; padding: 7px 0 0 10px; background: linear-gradient(#fff 40%, #e4e9eb); border-bottom: 2px solid #8d9297; }
.pick { display: flex; flex-direction: column; gap: 6px; width: 84px; height: 84px; padding: 2px 6px; background: #c8daf2; text-align: left; }
.pick svg { width: 50px; height: 38px; }
.pick span { padding-left: 4px; }
.strip { height: 37px; padding: 5px 4px; background: #c6c9cf; border-bottom: 2px solid #96999e; }
.strip .combo { width: 120px; }
.workspace { flex: 1; min-height: 0; display: flex; justify-content: space-between; background: #fff; }
.back-nav { width: 160px; border-left: 1px solid #b9bec6; }
.back-title { height: 26px; padding-left: 11px; line-height: 24px; color: #666; background: #e3e3e5; border-bottom: 1px solid #c3c6cb; }
.back-tools { height: 38px; padding: 12px 7px; background: #eee; border-bottom: 2px solid #c8ccd3; }
.back-tools svg { width: 16px; height: 14px; }
.back-nav .nav { padding-top: 4px; }
.back-nav .nav li { padding-left: 6px; }
.after-open { margin-top: 270px; }
.back-side { display: flex; flex-direction: column; width: 60px; background: #eee; border-right: 1px solid #c3c6cb; }
.side-head { height: 16px; background: #d4d4da; text-align: right; padding-right: 7px; border-bottom: 1px solid #c0c3c9; }
.side-head button { display: inline-block; font-size: 14px; line-height: 13px; color: #777; vertical-align: top; }
.side-bar { height: 27px; border-bottom: 1px solid #c9ccd2; }
.side-bar.tall { height: 37px; }
.side-body { flex: 1; min-height: 0; display: flex; margin: 3px 4px 0 0; border: 1px solid #c6c9ce; background: #fff; }
.side-grid { width: 36px; border-right: 1px solid #d4d6da; background: repeating-linear-gradient(#fff 0 25px, #d9dbdf 25px 26px); }
.side-th { height: 26px; padding-left: 11px; line-height: 26px; background: #eee; color: #555; border-bottom: 1px solid #c6c9ce; }
.side-scroll { flex: 1; display: flex; flex-direction: column; align-items: center; padding: 4px 0; }
.side-scroll .thumb { width: 10px; height: 144px; margin: 117px 0 auto; background: #c9c9c9; border-radius: 5px; }
.side-foot { display: flex; justify-content: flex-end; height: 49px; padding: 8px 11px 9px 0; }
.side-foot button { width: 48px; height: 32px; background: #fafafa; border: 2px solid #c9d3e3; border-radius: 4px; text-align: right; padding-right: 9px; color: #333; }

.status { display: flex; height: 38px; padding: 6px 16px 0 3px; background: #dcdcdf; border-bottom: 2px solid #f2f2f2; line-height: 28px; color: #444; white-space: nowrap; }
.coord { width: 328px; font-family: "Open Sans", sans-serif; }
.level { width: 51px; }
.level-v { width: 53px; }
.elev { width: 51px; }
.elev-v { width: 115px; }
.zero { width: 129px; }
.hid { width: 129px; }
.modes { display: flex; gap: 4px; }
.modes button { display: flex; align-items: center; justify-content: center; gap: 6px; height: 29px; padding: 0 5px; background: #cdcdd0; border: solid #a3a3a6; border-width: 0 2px 2px; color: #444; }
.modes svg { width: 18px; height: 18px; }
.modes .on { background: #fff; border-color: #4ba3f5; }
.hint { margin-left: 8px; }
.fps { margin-left: auto; }

.taskbar { display: flex; align-items: center; height: 50px; background: linear-gradient(90deg, #1b1b1b 59%, #33371f 66%, #353926 78%, #2c2e20 88%, #1c1c1a 94%, #181818); color: #fff; }
.start { width: 60px; height: 50px; display: grid; place-items: center; }
.start svg { width: 20px; height: 20px; }
.task-search { display: flex; align-items: center; width: 430px; height: 50px; padding-left: 14px; gap: 13px; background: #f2f2f2; border: 1px solid #bbb; }
.task-search svg { width: 22px; height: 20px; }
.task-search input { flex: 1; min-width: 0; border: 0; background: none; padding: 0; font-size: 19px; line-height: 28px; }
.task-search input::placeholder { color: #222; }
.task-sys { display: flex; align-items: center; gap: 40px; width: 143px; padding-left: 20px; }
.task-sys svg { width: 20px; height: 20px; }
.task-sys .grip { width: 4px; height: 26px; margin-left: -12px; border: solid #444; border-width: 0 1px; }
.task-apps { display: flex; height: 50px; gap: 10px; padding-left: 5px; }
.task-apps a { display: grid; place-items: center; width: 52px; border-bottom: 3px solid transparent; }
.task-apps svg { width: 28px; height: 28px; }
.task-apps .run { border-color: #76b9ed; }
.task-apps .active { width: 62px; margin: 0 -5px; background: #484848; }
.cad { font: 700 10px "Liberation Sans", sans-serif; fill: #fff; }
.tray { display: flex; align-items: center; gap: 10px; margin-left: auto; }
.tray svg { width: 20px; height: 20px; }
.tray .chev { width: 16px; height: 16px; margin: 0 0 0 -3px; }
.ime { width: 18px; font-size: 17px; line-height: 20px; margin: 0 8px 0 0; text-align: center; }
.clock { display: flex; flex-direction: column; width: 119px; text-align: center; line-height: 23px; }
.notice { display: grid; width: 49px; margin-right: 5px; height: 50px; align-items: center; padding-left: 2px; border-right: 1px solid #777; }
.notice svg { grid-area: 1 / 1; width: 30px; height: 32px; margin-top: 12px; }
.notice b { grid-area: 1 / 1; margin: 22px 0 0 16px; font-size: 15px; }

/* definition window, floating above the main one */
.dialog { position: absolute; inset: 33px 48px 82px 48px; display: flex; flex-direction: column; background: #fff; }
.dlg-head { display: flex; justify-content: space-between; align-items: center; height: 34px; padding: 0 12px 0 10px; background: #2d7fe0; border-bottom: 1px solid #8fb9ec; color: #fff; }
.dlg-controls { display: flex; gap: 23px; }
.dlg-controls svg { width: 12px; height: 12px; }
.dlg-main { flex: 1; min-height: 0; display: flex; flex-direction: column; border: solid #bcc3cd; border-width: 0 2px 2px; }
.toolbar { display: flex; align-items: center; color: #333; }
.toolbar button { display: flex; align-items: center; gap: 5px; }
.toolbar svg { width: 20px; height: 20px; }
.toolbar .drop .caret { margin: 0 0 0 4px; }
.toolbar .drop { margin-right: -6px; }
.top-tools { height: 33px; gap: 16px; padding-left: 2px; border-bottom: 1px solid #d5d7db; }
.top-tools .combo { width: 125px; margin-right: -11px; }
.top-tools .drop { margin-right: -5px; }
.sep { width: 1px; height: 25px; margin: 0 -5px 0 -4px; background: #cfd2d6; }
.sub-tools { height: 37px; gap: 18px; padding-left: 4px; background: #eee; border-bottom: 1px solid #cdd0d6; }
.dlg-body { flex: 1; min-height: 0; display: grid; grid-template-columns: 164px 385px minmax(0, 1fr); gap: 6px; }
.panel { display: flex; flex-direction: column; min-height: 0; overflow: hidden; border: solid #cdd0d6; border-width: 0 1px 1px 0; background: #fff; }
.mid .panel { border-left-width: 1px; }
.mid { display: grid; grid-template-rows: minmax(0, 489fr) minmax(0, 400fr); gap: 7px; min-height: 0; }
.panel-title { flex: none; height: 40px; padding-left: 9px; line-height: 26px; color: #666; background: #eee; border-top: 13px solid #d3d3da; border-bottom: 1px solid #c6cad1; }
.nav { flex: 1; padding-top: 5px; }
.nav li { display: flex; align-items: center; height: 30px; padding-left: 7px; gap: 5px; white-space: nowrap; color: #222; }
.nav svg { width: 20px; height: 20px; }
.nav .fi { width: 18px; height: 18px; }
.nav .kid { height: 26px; margin: 2px 0 2px 50px; padding-left: 5px; gap: 8px; }
.nav .kid + .kid { margin-top: 4px; }
.nav .sel, .parts .sel, .tree .sel { background: #c8daf2; }
.hbar { width: 129px; height: 10px; margin: 0 0 3px 13px; border-radius: 5px; background: #c9c9c9; }
.hbar.wide { width: 291px; margin: 0 0 1px 12px; }

.search { display: flex; align-items: center; background: #fff; }
.search input { flex: 1; min-width: 0; padding: 0; border: 0; outline: 0; background: none; line-height: 20px; }
.search svg { width: 16px; height: 16px; }
.search.flat { height: 26px; padding: 0 5px 0 3px; border-bottom: 2px solid #cfd2d7; }
.search.boxed { height: 31px; margin: 5px 4px 5px 5px; padding: 0 6px 0 3px; border: 2px solid #cdd0d4; }
.parts { flex: 1; }
.parts li { display: flex; align-items: center; height: 26px; gap: 8px; padding-left: 11px; white-space: nowrap; color: #111; }
.parts .part { margin-left: 50px; padding-left: 3px; overflow: hidden; }
.open { width: 9px; height: 8px; background: #222; clip-path: polygon(100% 0, 100% 100%, 0 100%); }
.shut { width: 7px; height: 11px; }
.shut::before { content: ""; display: block; width: 7px; height: 11px; background: #888; clip-path: polygon(0 0, 100% 50%, 0 100%, 0 0, 1px 3px, 1px 8px, 5px 50%, 1px 3px); }

table { table-layout: fixed; border-collapse: separate; border-spacing: 0; }
th, td { padding: 0; font-weight: 400; border: solid #cdd0d6; border-width: 0 1px 1px 0; overflow: hidden; }
td { text-align: left; }

.props-wrap { flex: 1; background: linear-gradient(90deg, #eee 27px, #fff 27px); }
.props { width: 382px; border-top: 1px solid #c6cad1; }
.props .p0 { width: 27px; }
.props .p1 { width: 126px; }
.props .p2 { width: 178px; }
.props .p3 { width: 51px; }
.props tr { height: 26px; }
.props th { background: #eee; color: #555; }
.props thead th:first-child { background: #e9edf5; }
.props td { padding-left: 4px; white-space: nowrap; color: #111; }
.props td.link { color: #2f6bf5; }
.props td.off { background: #e8e8e8; }
.props td.tick { padding: 0; text-align: center; }
.props input { display: block; appearance: none; width: 18px; height: 17px; margin: 0 auto 3px; border: 2px solid #7d7d7d; border-radius: 3px; background: #fff; }
.props td.grp { padding-left: 3px; }
.plus { display: inline-block; width: 16px; height: 16px; margin-right: 8px; border: 1px solid #444; border-radius: 2px; line-height: 13px; }

.work { display: grid; grid-template-rows: auto minmax(0, 345fr) minmax(0, 461fr) 13px; min-height: 0; background: #efefef; }
.sheet { display: flex; flex-direction: column; justify-content: space-between; overflow: hidden; background: #fff; border: solid #cdd0d6; border-width: 0 0 1px 1px; }
.bill { width: 1274px; font-feature-settings: "hwid"; }
.bill .b0 { width: 26px; }
.bill .b1 { width: 139px; }
.bill .b2 { width: 57px; }
.bill .b3 { width: 251px; }
.bill .b4 { width: 252px; }
.bill .b5 { width: 57px; }
.bill .b6 { width: 126px; }
.bill .b7 { width: 189px; }
.bill .b8 { width: 89px; }
.bill .b9 { width: 88px; }
.bill tr { height: 28px; }
.bill thead tr { height: 27px; }
.bill tr.one { height: 27px; }
.bill tr.two { height: 36px; }
.bill tr.three { height: 51px; }
.bill th { background: #eee; color: #222; }
.bill thead th { border-bottom: 2px solid #d5d8dd; }
.bill thead th:first-child { background: #e9edf5; }
.bill thead th.hot { background: #a9d4ff; font-weight: 700; }
.bill td { padding: 0 3px 0 2px; line-height: 15px; color: #000; }
.bill td.full { font-feature-settings: normal; text-spacing-trim: space-all; }
.bill .item td { background: #ace8fa; }
.bill .cur { background: #a9d4ff; font-weight: 700; }
.bill .mid-c { text-align: center; }
.bill .num { text-align: right; }
.bill .edit { border: 2px solid #2fa8d4; }
.fold { width: 14px; height: 15px; margin: 0 8px 0 1px; background: #fff; border: 1px solid #b5c4cc; line-height: 11px; font-weight: 700; vertical-align: top; }
.branch { display: inline-block; width: 21px; height: 8px; margin: 0 5px 0 9px; vertical-align: middle; border: solid #dcdcdc; border-width: 0 0 1px 1px; }
.sheet-scroll { display: flex; align-items: center; gap: 4px; height: 14px; padding: 0 3px 0 2px; margin-bottom: 2px; }
.sheet-scroll .track { flex: 0 1 926px; height: 10px; border-radius: 5px; background: #c9c9c9; }
.sheet-scroll .right { margin-left: auto; }

.lower { display: flex; flex-direction: column; min-height: 0; background: #eee; border: solid #cdd0d6; border-width: 0 0 2px; }
.tabs { display: flex; align-items: flex-end; gap: 4px; height: 43px; flex: none; }
.tab { display: flex; align-items: center; height: 28px; padding: 0 9px 0 6px; gap: 10px; background: #dcdcdc; border-radius: 3px 3px 0 0; color: #444; }
.tab .x { padding-bottom: 8px; }
.tab svg { width: 10px; height: 10px; fill: none; stroke: #666; stroke-width: 1.5; }
.tab.act { height: 32px; margin-left: -2px; padding-right: 8px; background: #fff; color: #2d7fe0; border: 1px solid #cdd0d6; border-bottom: 0; }
.tab-end { width: 1px; height: 37px; background: #cdd0d6; margin-left: -1px; }
.query { flex: 1; min-height: 0; display: grid; grid-template-columns: 313px minmax(0, 1fr); gap: 7px; }
.chapters { display: flex; flex-direction: column; min-height: 0; border: 1px solid #c6cad1; }
.tree-area { flex: 1; min-height: 0; display: flex; background: #fff; border-top: 1px solid #c6cad1; overflow: hidden; }
.tree { flex: 1; display: flex; flex-direction: column; margin-top: -3px; }
.tree li { flex: 1; display: flex; align-items: center; min-height: 26px; white-space: nowrap; color: #222; }
.tree .l1 { padding-left: 12px; }
.tree .l2 { padding-left: 55px; }
.tree .l3 { padding-left: 4px; margin-left: 75px; }
.tree .open { margin-right: 9px; }
.tree .shut { margin: 3px 8px 0 -15px; }
.tree .l2 .open { margin: 3px 7px 0 -16px; }
.vbar { width: 9px; height: 120px; margin: 95px 3px 0 5px; border-radius: 5px; background: #c9c9c9; }
.quota { display: flex; justify-content: space-between; align-items: flex-start; min-height: 0; overflow: hidden; background: #fff; border: 2px solid #8f96a3; border-width: 2px 1px 2px 1px; }
.rates { width: 562px; font-feature-settings: "hwid"; }
.rates .r0 { width: 25px; }
.rates .r1 { width: 139px; }
.rates .r2 { width: 252px; }
.rates .r3 { width: 57px; }
.rates .r4 { width: 89px; }
.rates tr { height: 24px; }
.rates tbody tr:nth-child(4n) { height: 23px; }
.rates thead tr { height: 26px; }
.rates th, .rates td { border-color: #dcdee2; color: #000; white-space: nowrap; line-height: 19px; }
.rates td { padding-left: 2px; }
.rates .hot { background: #feecb4; border-bottom: 2px solid #2fa8d4; font-weight: 700; }
.rates .cur { background: #feecb4; border-right: 2px solid #2fa8d4; font-weight: 700; }
.rates .pickd { padding-left: 0; border: 2px solid #7f7f7f; }
.bluebar { width: 10px; height: 197px; margin: 131px 5px 0 0; background: #7fa6e8; }
.filters { flex: none; display: flex; align-items: center; height: 33px; padding-left: 8px; }
.filters .combo { margin: 0 5px; }
.combo.lib { width: 330px; }
.combo.major { width: 84px; }
.combo.kind { width: 54px; }
.dlg-foot { display: flex; justify-content: flex-end; padding: 1px 2px; }
.dlg-foot svg { width: 11px; height: 11px; }
```
